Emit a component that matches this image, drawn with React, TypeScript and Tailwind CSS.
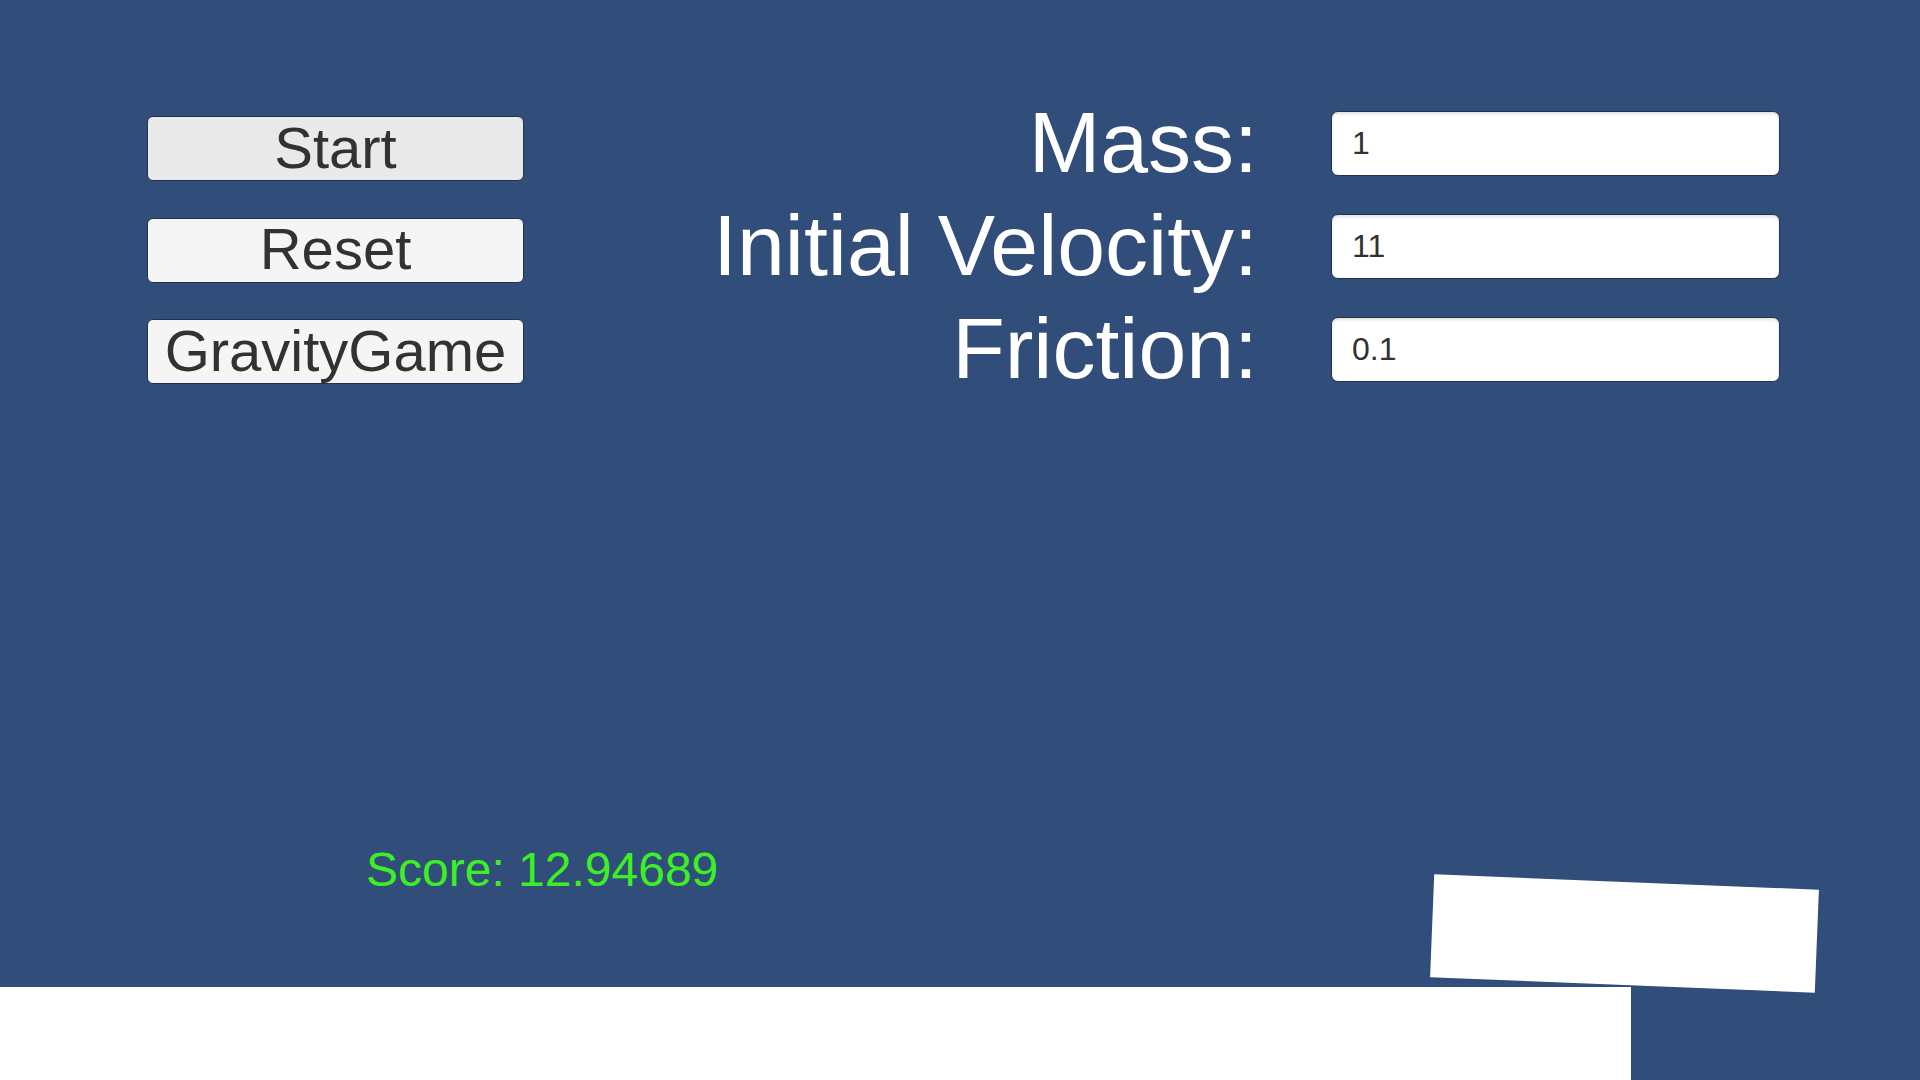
import { useState } from "react";

const FONT = "font-['Liberation_Sans','Arial',sans-serif]";

function GameButton({ label, active }: { label: string; active?: boolean }) {
  return (
    <button
      type="button"
      className={[
        "flex h-[65px] w-[377px] items-center justify-center rounded-[6px] border border-[#22324a] text-[58px] leading-none text-[#323232]",
        active ? "bg-[#e9e9e9]" : "bg-[#f5f5f5]",
      ].join(" ")}
    >
      <span className="-mt-[2px]">{label}</span>
    </button>
  );
}

function Field({ label, value, onChange }: { label: string; value: string; onChange: (v: string) => void }) {
  return (
    <>
      <div className="flex h-[65px] items-center justify-end">
        <span className="-mt-[4px] whitespace-nowrap text-[86px] leading-none text-white">{label}</span>
      </div>
      <input
        value={value}
        onChange={(e) => onChange(e.target.value)}
        className="h-[65px] w-[449px] rounded-[7px] border border-[#22324a] bg-white px-[20px] text-[32px] text-[#323232] shadow-[inset_0_2px_3px_rgba(0,0,0,0.12)] outline-none"
      />
    </>
  );
}

export default function App() {
  const [mass, setMass] = useState("1");
  const [velocity, setVelocity] = useState("11");
  const [friction, setFriction] = useState("0.1");

  return (
    <div className={`relative h-[1080px] w-[1920px] overflow-hidden bg-[#314d79] ${FONT}`}>
      {/* scene objects */}
      <div className="absolute bottom-0 left-0 h-[93px] w-[1631px] bg-white" />
      <div className="absolute left-[1432px] top-[882px] h-[103px] w-[385px] rotate-[2.3deg] bg-white" />

      {/* UI */}
      <div className="relative flex pl-[147px] pt-[111px]">
        <div className="mt-[5px] flex flex-col gap-[36.5px]">
          <GameButton label="Start" active />
          <GameButton label="Reset" />
          <GameButton label="GravityGame" />
        </div>

        <div className="ml-[36px] grid grid-cols-[698px_449px] gap-x-[73px] gap-y-[36px]">
          <Field label="Mass:" value={mass} onChange={setMass} />
          <Field label="Initial Velocity:" value={velocity} onChange={setVelocity} />
          <Field label="Friction:" value={friction} onChange={setFriction} />
        </div>
      </div>

      <div className="relative mt-[462px] pl-[366px] text-[48px] leading-none text-[#3cf024]">
        Score: 12.94689
      </div>
    </div>
  );
}
